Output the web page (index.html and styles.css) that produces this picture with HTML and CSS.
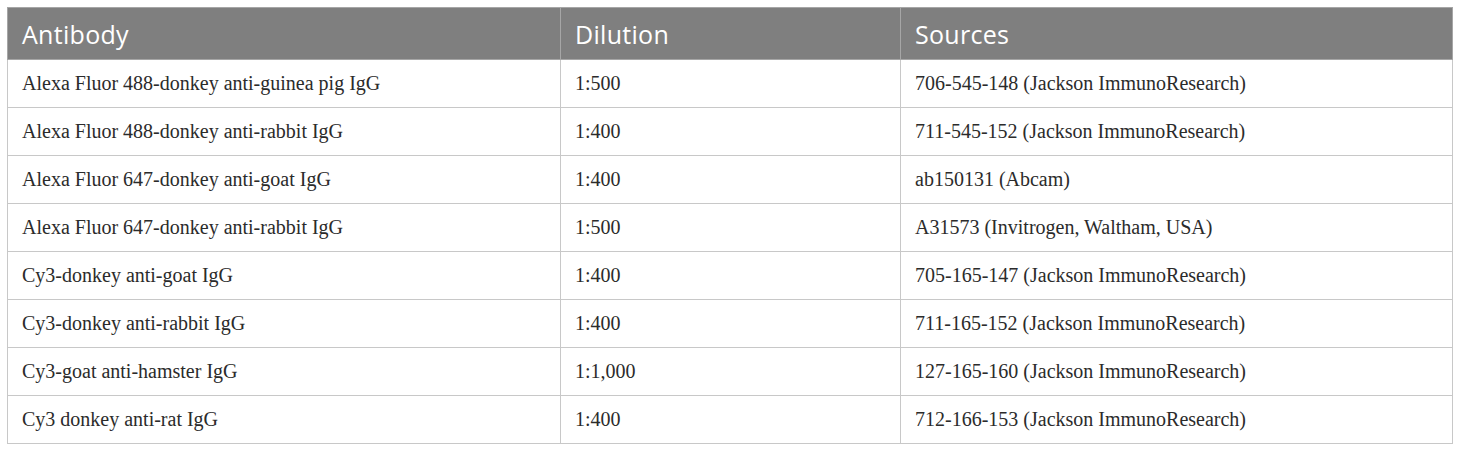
FILE: index.html
```html
<!DOCTYPE html>
<html>
<head>
<meta charset="utf-8">
<link rel="stylesheet" href="styles.css">
</head>
<body>
<table class="data">
  <thead>
    <tr><th class="c1">Antibody</th><th class="c2">Dilution</th><th class="c3">Sources</th></tr>
  </thead>
  <tbody>
    <tr><td>Alexa Fluor 488-donkey anti-guinea pig IgG</td><td>1:500</td><td>706-545-148 (Jackson ImmunoResearch)</td></tr>
    <tr><td>Alexa Fluor 488-donkey anti-rabbit IgG</td><td>1:400</td><td>711-545-152 (Jackson ImmunoResearch)</td></tr>
    <tr><td>Alexa Fluor 647-donkey anti-goat IgG</td><td>1:400</td><td>ab150131 (Abcam)</td></tr>
    <tr><td>Alexa Fluor 647-donkey anti-rabbit IgG</td><td>1:500</td><td>A31573 (Invitrogen, Waltham, USA)</td></tr>
    <tr><td>Cy3-donkey anti-goat IgG</td><td>1:400</td><td>705-165-147 (Jackson ImmunoResearch)</td></tr>
    <tr><td>Cy3-donkey anti-rabbit IgG</td><td>1:400</td><td>711-165-152 (Jackson ImmunoResearch)</td></tr>
    <tr><td>Cy3-goat anti-hamster IgG</td><td>1:1,000</td><td>127-165-160 (Jackson ImmunoResearch)</td></tr>
    <tr><td>Cy3 donkey anti-rat IgG</td><td>1:400</td><td>712-166-153 (Jackson ImmunoResearch)</td></tr>
  </tbody>
</table>
</body>
</html>
```
FILE: styles.css
```css
html, body {
  margin: 0;
  padding: 0;
  background: #ffffff;
}
body {
  padding: 7px;
}
.data {
  border-collapse: collapse;
  width: 1446px;
  table-layout: fixed;
}
.data th {
  background: #7f7f7f;
  color: #ffffff;
  font-family: "Open Sans", "Noto Sans", sans-serif;
  font-weight: 400;
  font-size: 25px;
  letter-spacing: 0.3px;
  text-align: left;
  height: 52px;
  padding: 0 0 0 14px;
  border: 1px solid #a6a6a6;
  box-sizing: border-box;
  vertical-align: middle;
}
.data .c1 { width: 553px; }
.data .c2 { width: 340px; }
.data td {
  font-family: "Liberation Serif", "Times New Roman", serif;
  font-size: 20px;
  color: #2b2b2b;
  height: 48px;
  padding: 0 0 0 14px;
  border: 1px solid #c8c8c8;
  box-sizing: border-box;
  vertical-align: middle;
}
```
